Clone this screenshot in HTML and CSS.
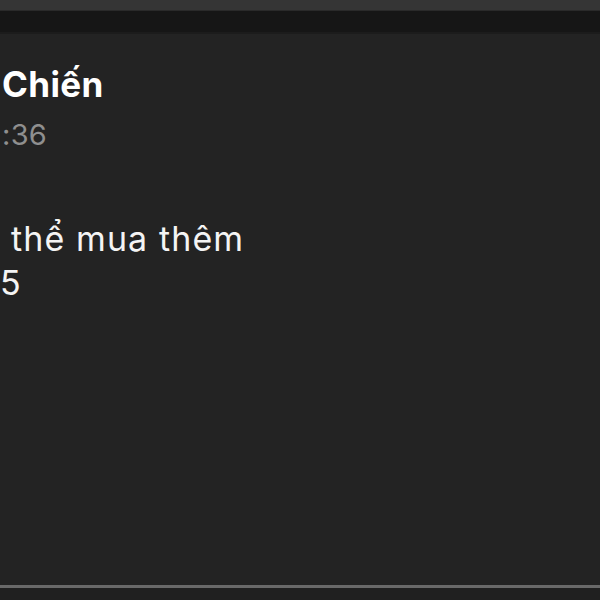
FILE: index.html
```html
<!DOCTYPE html>
<html lang="vi">
<head>
<meta charset="utf-8">
<link rel="stylesheet" href="styles.css">
</head>
<body>
<div class="screen">
  <div class="topbar"></div>
  <div class="subbar"></div>
  <div class="message">
    <div class="header">
      <div class="name">Chiến</div>
      <div class="time">:36</div>
    </div>
    <div class="body">
      <div class="line first">thể mua thêm</div>
      <div class="line">5</div>
    </div>
  </div>
  <div class="divider"></div>
  <div class="footer"></div>
</div>
</body>
</html>
```
FILE: styles.css
```css
html, body {
  margin: 0;
  padding: 0;
  background: #232323;
}
.screen {
  width: 600px;
  height: 600px;
  display: flex;
  flex-direction: column;
  overflow: hidden;
  background: #232323;
  font-family: Inter, "Liberation Sans", sans-serif;
}
.topbar {
  height: 10px;
  background: #353535;
  border-bottom: 1px solid #2a2a2a;
  flex: none;
}
.subbar {
  height: 21px;
  background: #161616;
  border-bottom: 2px solid #1c1c1c;
  flex: none;
}
.message {
  flex: 1;
  display: flex;
  flex-direction: column;
}
.header {
  padding: 30px 0 0 2px;
}
.name {
  color: #ffffff;
  font-weight: 700;
  font-size: 35px;
  line-height: 40px;
  letter-spacing: 0.4px;
}
.time {
  color: #8f8f8f;
  font-size: 29px;
  line-height: 40px;
  margin-top: 11px;
  letter-spacing: 0.3px;
}
.body {
  padding: 62px 0 0 0;
}
.line {
  color: #f4f4f4;
  font-size: 34px;
  line-height: 44px;
  letter-spacing: 1.1px;
}
.line.first {
  padding-left: 11px;
}
.divider {
  height: 3px;
  background: #696969;
  flex: none;
}
.footer {
  height: 12px;
  background: #202020;
  flex: none;
}
```
